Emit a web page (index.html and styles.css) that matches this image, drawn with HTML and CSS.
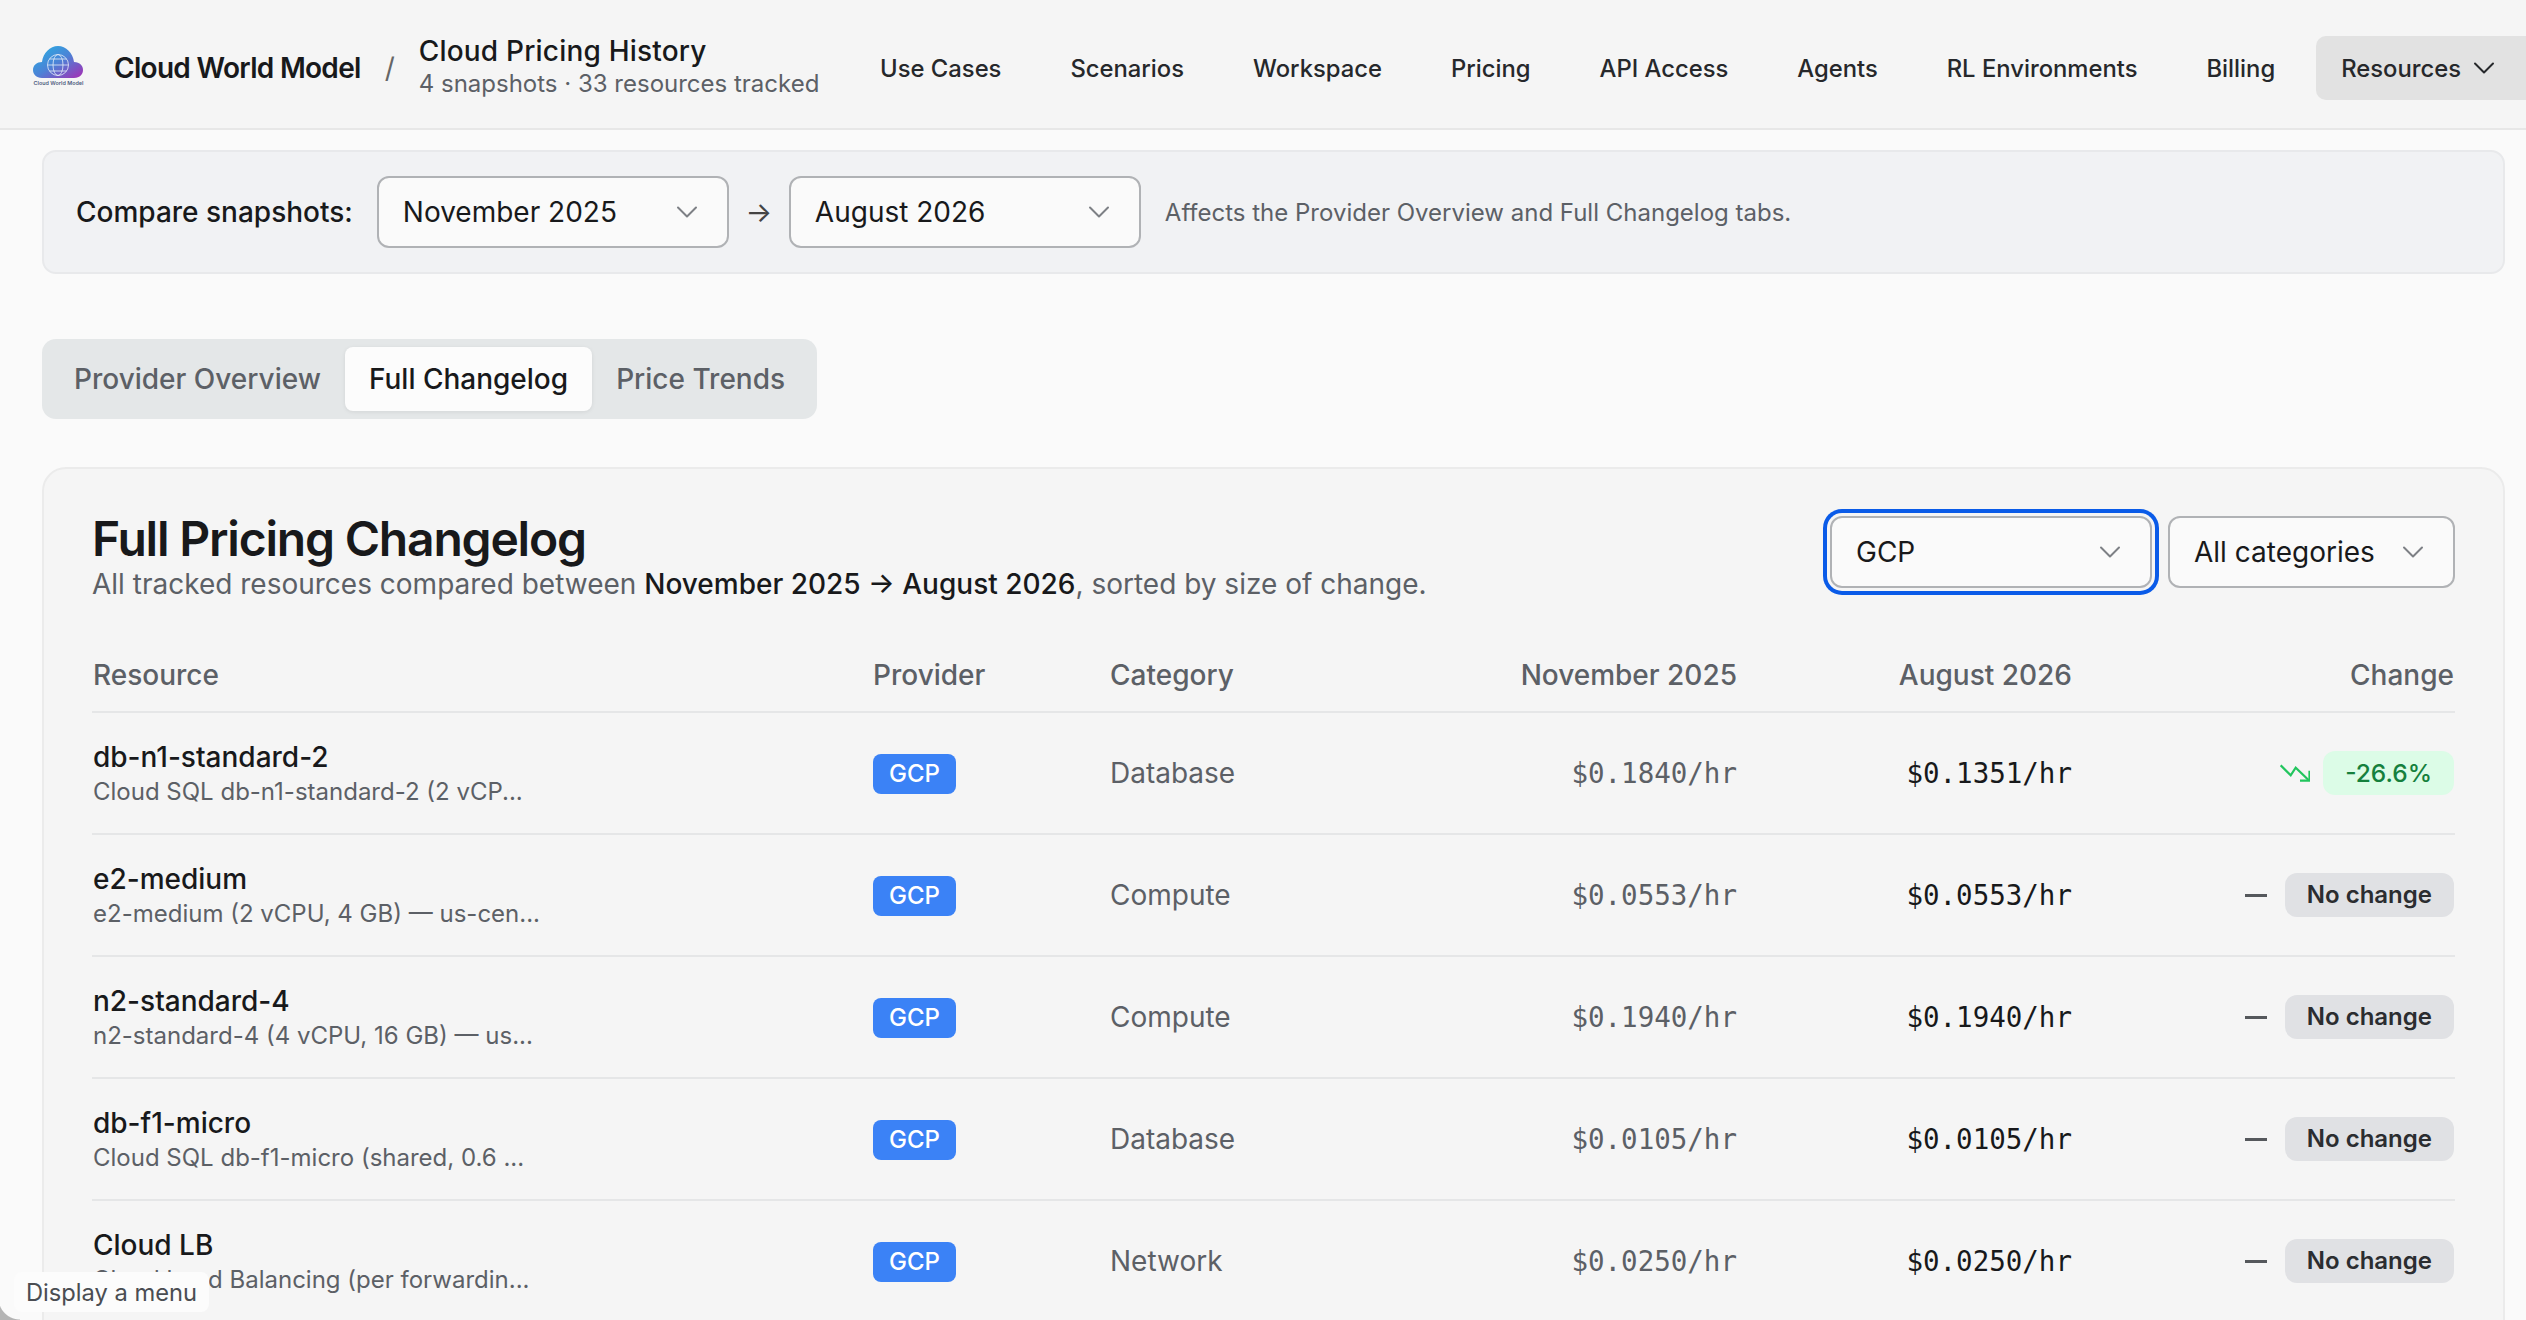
FILE: index.html
```html
<!DOCTYPE html>
<html lang="en">
<head>
    <meta charset="UTF-8">
    <title>Cloud Pricing History</title>
    <link rel="stylesheet" href="styles.css">
</head>
<body>
    <header class="topbar">
        <div class="brand">
            <svg class="logo" viewBox="0 0 51 40">
                <defs>
                    <linearGradient id="cloudFill" x1="0" y1="0" x2="1" y2="1">
                        <stop offset="0" stop-color="#25b4e4"/>
                        <stop offset="0.5" stop-color="#4c82d6"/>
                        <stop offset="1" stop-color="#a62db4"/>
                    </linearGradient>
                </defs>
                <path d="M9 32 C3 32 0 28 0 24 C0 19 4 16 9 16 C10 7 17 0 25 0 C33 0 40 7 41 16 C47 16 50 20 50 24 C50 28 47 32 41 32 Z" fill="url(#cloudFill)"/>
                <g fill="none" stroke="#e3ecf8" stroke-width="0.8">
                    <circle cx="25" cy="19" r="10.5"/>
                    <ellipse cx="25" cy="19" rx="5" ry="10.5"/>
                    <path d="M14.5 19 H35.5 M16.5 13 H33.5 M16.5 25 H33.5"/>
                </g>
                <text class="logo-text" x="25.5" y="39" text-anchor="middle">Cloud World Model</text>
            </svg>
            <span class="brand-name">Cloud World Model</span>
            <span class="brand-sep">/</span>
            <div class="page-title">
                <div class="page-name">Cloud Pricing History</div>
                <div class="page-sub">4 snapshots · 33 resources tracked</div>
            </div>
        </div>
        <nav class="nav">
            <a>Use Cases</a>
            <a>Scenarios</a>
            <a>Workspace</a>
            <a>Pricing</a>
            <a>API Access</a>
            <a>Agents</a>
            <a>RL Environments</a>
            <a>Billing</a>
            <a class="nav-open">Resources
                <svg class="chev" viewBox="0 0 22 12"><path d="M2 1.5 L11 10.5 L20 1.5"/></svg>
            </a>
        </nav>
    </header>

    <main class="content">
        <section class="compare">
            <label class="compare-label">Compare snapshots:</label>
            <div class="select select-snapshot">November 2025
                <svg class="chev" viewBox="0 0 22 12"><path d="M2 1.5 L11 10.5 L20 1.5"/></svg>
            </div>
            <span class="compare-arrow">→</span>
            <div class="select select-snapshot">August 2026
                <svg class="chev" viewBox="0 0 22 12"><path d="M2 1.5 L11 10.5 L20 1.5"/></svg>
            </div>
            <span class="compare-note">Affects the Provider Overview and Full Changelog tabs.</span>
        </section>

        <div class="tabs">
            <button class="tab">Provider Overview</button>
            <button class="tab tab-active">Full Changelog</button>
            <button class="tab">Price Trends</button>
        </div>

        <section class="card">
            <div class="card-head">
                <div>
                    <h2>Full Pricing Changelog</h2>
                    <p>All tracked resources compared between <strong>November 2025 → August 2026</strong>, sorted by size of change.</p>
                </div>
                <div class="filters">
                    <div class="select select-provider">GCP
                        <svg class="chev" viewBox="0 0 22 12"><path d="M2 1.5 L11 10.5 L20 1.5"/></svg>
                    </div>
                    <div class="select select-category">All categories
                        <svg class="chev" viewBox="0 0 22 12"><path d="M2 1.5 L11 10.5 L20 1.5"/></svg>
                    </div>
                </div>
            </div>

            <table class="changes">
                <thead>
                    <tr>
                        <th class="col-resource">Resource</th>
                        <th class="col-provider">Provider</th>
                        <th class="col-category">Category</th>
                        <th class="col-old num">November 2025</th>
                        <th class="col-new num">August 2026</th>
                        <th class="col-change num">Change</th>
                    </tr>
                </thead>
                <tbody>
                    <tr>
                        <td><div class="res-name">db-n1-standard-2</div><div class="res-desc">Cloud SQL db-n1-standard-2 (2 vCP...</div></td>
                        <td><span class="badge-gcp">GCP</span></td>
                        <td class="cat">Database</td>
                        <td class="num price-old">$0.1840/hr</td>
                        <td class="num price-new">$0.1351/hr</td>
                        <td class="num"><div class="delta">
                            <svg class="trend" viewBox="0 0 30 18"><path d="M0.7 1.3 L10.7 11.3 L15.7 3.7 L28.5 16"/><path d="M29.5 6.7 V16.7 H20"/></svg>
                            <span class="pill pill-down">-26.6%</span>
                        </div></td>
                    </tr>
                    <tr>
                        <td><div class="res-name">e2-medium</div><div class="res-desc">e2-medium (2 vCPU, 4 GB) — us-cen...</div></td>
                        <td><span class="badge-gcp">GCP</span></td>
                        <td class="cat">Compute</td>
                        <td class="num price-old">$0.0553/hr</td>
                        <td class="num price-new">$0.0553/hr</td>
                        <td class="num"><div class="delta"><span class="dash"></span><span class="pill">No change</span></div></td>
                    </tr>
                    <tr>
                        <td><div class="res-name">n2-standard-4</div><div class="res-desc">n2-standard-4 (4 vCPU, 16 GB) — us...</div></td>
                        <td><span class="badge-gcp">GCP</span></td>
                        <td class="cat">Compute</td>
                        <td class="num price-old">$0.1940/hr</td>
                        <td class="num price-new">$0.1940/hr</td>
                        <td class="num"><div class="delta"><span class="dash"></span><span class="pill">No change</span></div></td>
                    </tr>
                    <tr>
                        <td><div class="res-name">db-f1-micro</div><div class="res-desc">Cloud SQL db-f1-micro (shared, 0.6 ...</div></td>
                        <td><span class="badge-gcp">GCP</span></td>
                        <td class="cat">Database</td>
                        <td class="num price-old">$0.0105/hr</td>
                        <td class="num price-new">$0.0105/hr</td>
                        <td class="num"><div class="delta"><span class="dash"></span><span class="pill">No change</span></div></td>
                    </tr>
                    <tr>
                        <td><div class="res-name">Cloud LB</div><div class="res-desc">Cloud Load Balancing (per forwardin...</div></td>
                        <td><span class="badge-gcp">GCP</span></td>
                        <td class="cat">Network</td>
                        <td class="num price-old">$0.0250/hr</td>
                        <td class="num price-new">$0.0250/hr</td>
                        <td class="num"><div class="delta"><span class="dash"></span><span class="pill">No change</span></div></td>
                    </tr>
                </tbody>
            </table>
        </section>
    </main>

    <div class="corner"></div>
    <div class="tooltip">Display a menu</div>
</body>
</html>
```

FILE: styles.css
```css
* {
    box-sizing: border-box;
}

html, body {
    height: 100%;
}

body {
    margin: 0;
    height: 1320px;
    overflow: hidden;
    font-family: "Inter", "Liberation Sans", sans-serif;
    font-size: 24px;
    color: #18191b;
    background-color: #fafafa;
}

.chev {
    width: 22px;
    height: 12px;
    flex: none;
    fill: none;
    stroke: currentColor;
    stroke-width: 2;
    stroke-linecap: round;
    stroke-linejoin: round;
}

/* top bar */
.topbar {
    height: 130px;
    display: flex;
    align-items: center;
    justify-content: space-between;
    padding-left: 33px;
    padding-top: 4px;
    background-color: #f5f5f5;
    border-bottom: 2px solid #e7e7e7;
}

.brand {
    display: flex;
    align-items: center;
}

.logo {
    width: 51px;
    height: 40px;
}

.logo-text {
    font-size: 5.4px;
    font-weight: 600;
    fill: #4f5d80;
}

.brand-name {
    margin-left: 30px;
    margin-top: 4px;
    font-size: 28px;
    font-weight: 600;
    letter-spacing: -0.7px;
}

.brand-sep {
    margin: 4px 24px 0;
    font-size: 28px;
    color: #666;
}

.page-name {
    font-size: 28px;
    font-weight: 500;
    letter-spacing: 0.2px;
    line-height: 36px;
}

.page-sub {
    line-height: 30px;
    color: #5c6066;
}

.nav {
    display: flex;
    align-items: center;
    gap: 19px;
    margin-top: 4px;
    font-size: 23.8px;
}

.nav a {
    display: flex;
    align-items: center;
    gap: 12px;
    height: 64px;
    padding: 0 25px;
    font-weight: 500;
    color: #26282b;
    border-radius: 10px;
}

.nav .nav-open {
    background-color: #e2e2e2;
    margin-left: -3px;
    padding-right: 31px;
    border-radius: 10px 0 0 10px;
}

/* content */
.content {
    padding: 20px 21px 0 42px;
}

.compare {
    height: 124px;
    display: flex;
    align-items: center;
    padding: 0 32px;
    background-color: #f1f2f4;
    border: 2px solid #e8e9eb;
    border-radius: 14px;
}

.compare-label {
    font-size: 28px;
    font-weight: 500;
    margin-right: 24px;
}

.select {
    display: flex;
    align-items: center;
    justify-content: space-between;
    height: 72px;
    padding: 0 29px 0 24px;
    font-size: 28px;
    color: #18191b;
    background-color: #fafafa;
    border: 2px solid #b0b2b5;
    border-radius: 12px;
}

.select .chev {
    color: #7d8085;
}

.select-snapshot {
    width: 352px;
}

.compare-arrow {
    width: 60px;
    text-align: center;
    font-size: 28px;
    color: #444;
}

.compare-note {
    margin-left: 24px;
    color: #5c6066;
}

.tabs {
    display: inline-flex;
    margin-top: 65px;
    padding: 8px;
    height: 80px;
    background-color: #e4e7e8;
    border-radius: 14px;
}

.tab {
    padding: 0 24px;
    font-family: inherit;
    font-size: 28px;
    font-weight: 500;
    color: #5c6066;
    background: none;
    border: none;
    border-radius: 8px;
}

.tab-active {
    color: #18191b;
    background-color: #fcfcfc;
    box-shadow: 0 1px 4px rgba(0, 0, 0, 0.08);
}

.card {
    margin-top: 48px;
    height: 900px;
    padding: 45px 48px 0;
    background-color: #f5f5f5;
    border: 2px solid #ebebeb;
    border-radius: 24px;
}

.card-head {
    display: flex;
    align-items: flex-start;
    justify-content: space-between;
}

.card-head h2 {
    margin: 0;
    font-size: 48px;
    line-height: 50px;
    font-weight: 600;
    letter-spacing: -1.2px;
}

.card-head p {
    margin: 0;
    font-size: 28px;
    line-height: 40px;
    color: #5c6066;
}

.card-head strong {
    font-weight: 500;
    color: #18191b;
}

.filters {
    display: flex;
    align-items: center;
    gap: 16px;
    margin-top: 2px;
}

.select-provider {
    width: 322px;
    box-shadow: 0 0 0 3px #f5f5f5, 0 0 0 7px #0a5be8;
    border-radius: 12px;
}

.select-category {
    width: 287px;
}

/* table */
.changes {
    width: 100%;
    margin-top: 35px;
    border-collapse: collapse;
    table-layout: fixed;
}

.changes th {
    height: 73px;
    font-size: 28px;
    font-weight: 500;
    color: #5c6066;
    text-align: left;
    border-bottom: 2px solid #e5e6e7;
}

.changes td {
    height: 122px;
    border-bottom: 2px solid #e5e6e7;
}

.changes .num {
    text-align: right;
}

.col-resource { width: 780px; }
.col-provider { width: 237px; }
.col-category { width: 200px; }
.col-old { width: 429px; }
.col-new { width: 335px; }

.res-name {
    font-size: 28px;
    font-weight: 500;
    line-height: 38px;
}

.res-desc {
    line-height: 32px;
    color: #5c6066;
}

.badge-gcp {
    display: inline-block;
    margin-top: 2px;
    padding: 0 16px;
    line-height: 40px;
    font-weight: 500;
    color: #fff;
    background-color: #3b82f6;
    border-radius: 8px;
}

.cat {
    font-size: 28px;
    color: #5c6066;
}

.price-old,
.price-new {
    font-family: "DejaVu Sans Mono", "Liberation Mono", monospace;
    font-size: 27.5px;
}

.price-old {
    color: #5c6066;
}

.delta {
    display: flex;
    align-items: center;
    justify-content: flex-end;
    gap: 13px;
}

.pill {
    display: inline-block;
    padding: 0 22px;
    line-height: 44px;
    font-size: 24px;
    font-weight: 600;
    color: #2b2d30;
    background-color: #e0e1e4;
    border-radius: 12px;
}

.pill-down {
    font-size: 24.5px;
    font-weight: 500;
    color: #15803d;
    background-color: #dcfce7;
}

.trend {
    width: 30px;
    height: 18px;
    fill: none;
    stroke: #22c55e;
    stroke-width: 2.2;
}

.dash {
    width: 22px;
    height: 3px;
    margin-right: 5px;
    background-color: #55585c;
}

/* overlays */
.corner {
    position: absolute;
    left: 0;
    bottom: 0;
    width: 20px;
    height: 22px;
    background: radial-gradient(circle at 100% 0, transparent 21px, #b4b4b4 22px);
}

.tooltip {
    position: absolute;
    left: 14px;
    bottom: 8px;
    height: 40px;
    padding: 0 12px;
    display: flex;
    align-items: center;
    font-size: 23.7px;
    color: #4a4d52;
    background-color: #fcfcfc;
    border-radius: 8px;
}
```
